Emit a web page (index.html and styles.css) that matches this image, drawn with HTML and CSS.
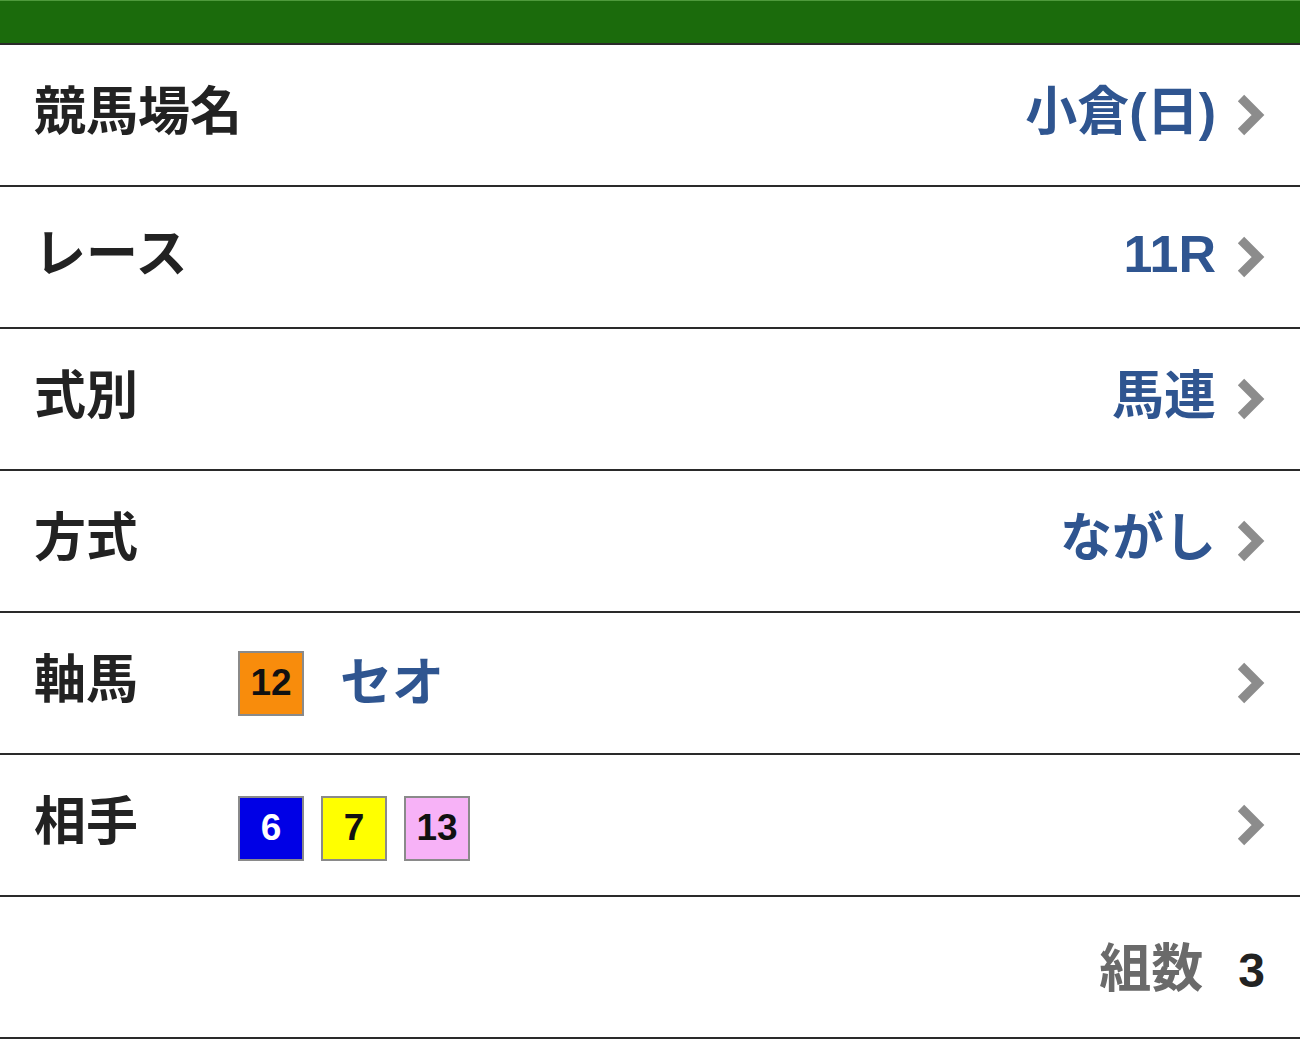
FILE: index.html
```html
<!DOCTYPE html>
<html lang="ja">
<head>
<meta charset="utf-8">
<link rel="stylesheet" href="styles.css">
</head>
<body>
<div class="topbar"></div>
<ul class="list">
  <li class="row">
    <span class="label">競馬場名</span>
    <span class="value">小倉(日)</span>
    <svg class="chev" viewBox="0 0 28 42" width="28" height="42"><polyline points="4,4 21,21 4,38"/></svg>
  </li>
  <li class="row">
    <span class="label">レース</span>
    <span class="value">11R</span>
    <svg class="chev" viewBox="0 0 28 42" width="28" height="42"><polyline points="4,4 21,21 4,38"/></svg>
  </li>
  <li class="row">
    <span class="label">式別</span>
    <span class="value">馬連</span>
    <svg class="chev" viewBox="0 0 28 42" width="28" height="42"><polyline points="4,4 21,21 4,38"/></svg>
  </li>
  <li class="row">
    <span class="label">方式</span>
    <span class="value">ながし</span>
    <svg class="chev" viewBox="0 0 28 42" width="28" height="42"><polyline points="4,4 21,21 4,38"/></svg>
  </li>
  <li class="row">
    <span class="label fixed">軸馬</span>
    <span class="horses">
      <span class="badge orange">12</span>
      <span class="name">セオ</span>
    </span>
    <svg class="chev" viewBox="0 0 28 42" width="28" height="42"><polyline points="4,4 21,21 4,38"/></svg>
  </li>
  <li class="row">
    <span class="label fixed">相手</span>
    <span class="horses partners">
      <span class="badge blue">6</span>
      <span class="badge yellow">7</span>
      <span class="badge pink">13</span>
    </span>
    <svg class="chev" viewBox="0 0 28 42" width="28" height="42"><polyline points="4,4 21,21 4,38"/></svg>
  </li>
  <li class="row total">
    <span class="count-label">組数</span>
    <span class="count">3</span>
  </li>
</ul>
</body>
</html>
```
FILE: styles.css
```css
html, body {
  margin: 0;
  padding: 0;
  background: #ffffff;
}
body {
  font-family: "Liberation Sans", "Noto Sans CJK JP", sans-serif;
  font-weight: 700;
  color: #222222;
}
.topbar {
  box-sizing: border-box;
  height: 45px;
  background: #1b6b0c;
  border-top: 1px solid #4e9a3c;
  border-bottom: 2px solid #2a2a2a;
}
.list {
  list-style: none;
  margin: 0;
  padding: 0;
}
.row {
  display: flex;
  align-items: center;
  box-sizing: border-box;
  height: 142px;
  padding: 0 35px 6px 34px;
  border-bottom: 2px solid #2a2a2a;
}
.label {
  font-size: 52px;
  line-height: 1;
  color: #222222;
  flex: 1;
}
.label.fixed {
  flex: 0 0 204px;
}
.value {
  font-size: 52px;
  line-height: 1;
  color: #2f5590;
}
.chev {
  margin-left: 21px;
  margin-top: 6px;
  flex: none;
}
.chev polyline {
  fill: none;
  stroke: #8c8c8c;
  stroke-width: 9;
}
.horses {
  flex: 1;
  display: flex;
  align-items: center;
  gap: 17px;
  margin-top: 6px;
}
.horses.partners {
  margin-top: 12px;
}
.badge {
  width: 66px;
  height: 65px;
  box-sizing: border-box;
  border: 2px solid #8a8a8a;
  display: flex;
  align-items: center;
  justify-content: center;
  font-family: "Liberation Sans", sans-serif;
  font-size: 37px;
  color: #111111;
}
.orange { background: #f88c0c; }
.blue { background: #0000e6; color: #ffffff; }
.yellow { background: #ffff00; }
.pink { background: #f7b2f7; }
.name {
  margin-left: 19px;
  font-size: 52px;
  color: #2f5590;
  line-height: 1;
}
.total {
  justify-content: flex-end;
  padding-top: 4px;
  padding-bottom: 0;
}
.count-label {
  font-size: 52px;
  color: #6a6a6a;
  line-height: 1;
}
.count {
  margin-left: 35px;
  font-size: 48px;
  color: #222222;
  line-height: 1;
  margin-top: 4px;
}
```
